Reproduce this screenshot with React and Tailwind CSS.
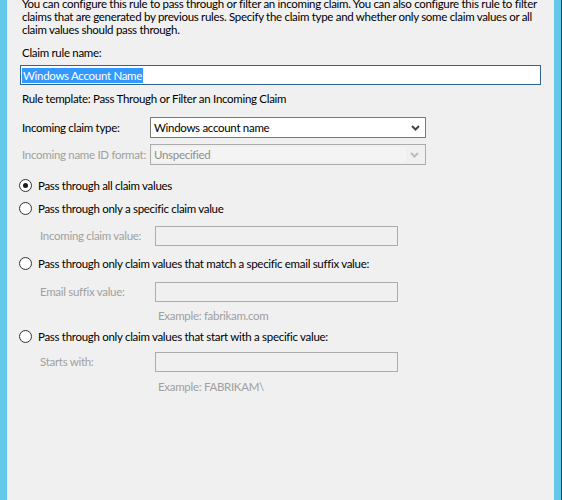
import React from 'react';

const Radio = ({ checked }) => (
    <span className="w-[13px] h-[13px] rounded-full border border-[#333333] bg-white flex items-center justify-center shrink-0">
        {checked && <span className="w-[5px] h-[5px] rounded-full bg-[#1a1a1a]" />}
    </span>
);

const Chevron = ({ color }) => (
    <svg width="9" height="6" viewBox="0 0 9 6">
        <path d="M1 1 L4.5 4.5 L8 1" fill="none" stroke={color} strokeWidth="2" />
    </svg>
);

const SubInput = ({ label }) => (
    <div className="h-[20px] flex items-center">
        <span className="w-[133px] shrink-0 pl-[18px] text-[#a0a0a0]">{label}</span>
        <div className="w-[243px] h-[20px] border border-[#acacac]" />
    </div>
);

const App = () => {
    return (
        <div className="w-[562px] h-[500px] flex bg-[#f0f0f0] overflow-hidden text-[11.5px] tracking-[-0.3px] text-black whitespace-nowrap" style={{ fontFamily: 'Lato, "Liberation Sans", sans-serif' }}>
            <div className="w-[7px] bg-[#64c8ea]" />
            <div className="flex-1 flex flex-col pl-[15px] pr-[13px]">
                {/* intro, first line is scrolled partly out of view */}
                <p className="mt-[-3px] leading-[13px]">
                    You can configure this rule to pass through or filter an incoming claim. You can also configure this rule to filter<br />
                    claims that are generated by previous rules. Specify the claim type and whether only some claim values or all<br />
                    claim values should pass through.
                </p>

                <div className="mt-[9px] h-[15px] leading-[15px]">Claim rule name:</div>
                <div className="mt-[5px] ml-[-2px] h-[20px] border border-[#2f6592] bg-white flex items-center px-[1px]">
                    <span className="bg-[#3399ff] text-white leading-[15px] px-[1px]">Windows Account Name</span>
                </div>

                <div className="mt-[6px] h-[15px] leading-[15px]">Rule template: Pass Through or Filter an Incoming Claim</div>

                {/* claim type */}
                <div className="mt-[11px] h-[21px] flex items-center">
                    <span className="w-[128px] shrink-0">Incoming claim type:</span>
                    <div className="w-[276px] h-[21px] border border-[#7a7a7a] bg-white flex items-center justify-between pl-[3px] pr-[5px]">
                        <span>Windows account name</span>
                        <Chevron color="#444444" />
                    </div>
                </div>
                <div className="mt-[6px] h-[21px] flex items-center">
                    <span className="w-[128px] shrink-0 text-[#a0a0a0]">Incoming name ID format:</span>
                    <div className="w-[276px] h-[21px] border border-[#acacac] flex items-center p-[2px]">
                        <div className="w-[253px] h-full bg-[#f4f4f4] flex items-center pl-[1px] text-[#8d8d8d]">Unspecified</div>
                        <div className="flex-1 flex justify-center"><Chevron color="#bcbcbc" /></div>
                    </div>
                </div>

                {/* options */}
                <div className="mt-[13px] h-[15px] flex items-center gap-[6px] ml-[-3px]">
                    <Radio checked />
                    <span>Pass through all claim values</span>
                </div>
                <div className="mt-[8px] h-[15px] flex items-center gap-[6px] ml-[-3px]">
                    <Radio />
                    <span>Pass through only a specific claim value</span>
                </div>
                <div className="mt-[10px]">
                    <SubInput label="Incoming claim value:" />
                </div>

                <div className="mt-[10px] h-[15px] flex items-center gap-[6px] ml-[-3px]">
                    <Radio />
                    <span>Pass through only claim values that match a specific email suffix value:</span>
                </div>
                <div className="mt-[11px]">
                    <SubInput label="Email suffix value:" />
                </div>
                <div className="mt-[6px] h-[15px] leading-[15px] pl-[136px] text-[#a0a0a0]">Example: fabrikam.com</div>

                <div className="mt-[6px] h-[15px] flex items-center gap-[6px] ml-[-3px]">
                    <Radio />
                    <span>Pass through only claim values that start with a specific value:</span>
                </div>
                <div className="mt-[8px]">
                    <SubInput label="Starts with:" />
                </div>
                <div className="mt-[7px] h-[15px] leading-[15px] pl-[136px] text-[#a0a0a0]">Example: FABRIKAM\</div>
            </div>
            <div className="w-[7px] bg-[#64c8ea]" />
            <div className="w-px bg-[#2b3a44]" />
        </div>
    );
};

export default App;
